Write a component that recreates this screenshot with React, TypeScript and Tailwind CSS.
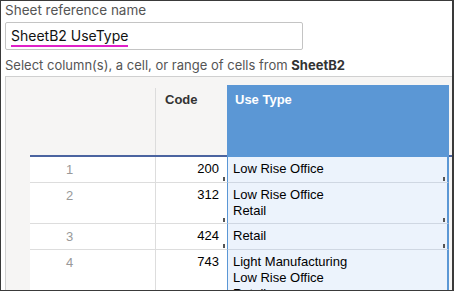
import React from 'react';

interface Row {
  num: number;
  code: number;
  uses: string[];
}

const rows: Row[] = [
  { num: 1, code: 200, uses: ['Low Rise Office'] },
  { num: 2, code: 312, uses: ['Low Rise Office', 'Retail'] },
  { num: 3, code: 424, uses: ['Retail'] },
  { num: 4, code: 743, uses: ['Light Manufacturing', 'Low Rise Office', 'Retail'] },
];

function Tick() {
  return <span className="absolute right-[2px] bottom-[1px] w-[2px] h-[4px] bg-[#555]" />;
}

export default function App() {
  return (
    <div className="w-[454px] h-[291px] overflow-hidden bg-white border border-r-2 border-[#3a3a3a] flex flex-col font-['Inter',sans-serif]">
      <div className="pl-[4px] pt-[1px] text-[13.5px] leading-[17px] text-[#555]">Sheet reference name</div>
      <div className="ml-[4px] mt-[3px] w-[298px] h-[28px] shrink-0 border border-[#c4c4c4] rounded-[2px] flex items-center pl-[5px]">
        <span className="text-[14px] text-[#111] border-b-2 border-[#e020c8] leading-[16px] pb-[1px] mt-[3px]">
          SheetB2 UseType
        </span>
      </div>
      <div className="pl-[4px] mt-[7px] text-[13px] leading-[17px] text-[#555]">
        Select column(s), a cell, or range of cells from <span className="font-bold text-[#333]">SheetB2</span>
      </div>
      <div className="ml-[4px] mt-[2px] flex-1 border-t border-l border-[#d0d0d0] bg-[#f6f5f4] pl-[24px] pt-[8px] font-['Liberation_Sans',Arial,sans-serif] text-[13px] leading-[16px]">
        {/* header */}
        <div className="flex h-[72px]">
          <div className="w-[125px] border-b-2 border-[#4b64a0]" />
          <div className="w-[72px] border-b-2 border-[#4b64a0] relative">
            <span className="absolute left-0 top-[3px] bottom-0 w-px bg-[#dcdcdc]" />
            <div className="pl-[10px] pt-[7px] font-bold text-[#333]">Code</div>
          </div>
          <div className="w-[222px] bg-[#5b97d5] pl-[8px] pt-[7px] font-bold text-white">Use Type</div>
          <div className="flex-1 border-b-2 border-[#4b64a0]" />
        </div>
        {rows.map((r) => (
          <div key={r.num} className="flex">
            <div className="w-[125px] bg-white border-b border-[#dddddd] pl-[36px] pt-[5px] pb-[4px] text-[#999]">
              {r.num}
            </div>
            <div className="relative w-[72px] bg-white border-l border-b border-[#dddddd] pr-[8px] pt-[4px] pb-[4px] text-right text-black">
              {r.code}
              <Tick />
            </div>
            <div className="relative w-[222px] bg-[#ecf3fc] border-l border-r-2 border-l-[#5b97d5] border-r-[#5b97d5] border-b border-b-[#cfd7e2] pl-[5px] pt-[4px] pb-[4px] text-black">
              {r.uses.map((u) => (
                <div key={u}>{u}</div>
              ))}
              <Tick />
            </div>
            <div className="flex-1" />
          </div>
        ))}
      </div>
    </div>
  );
}
